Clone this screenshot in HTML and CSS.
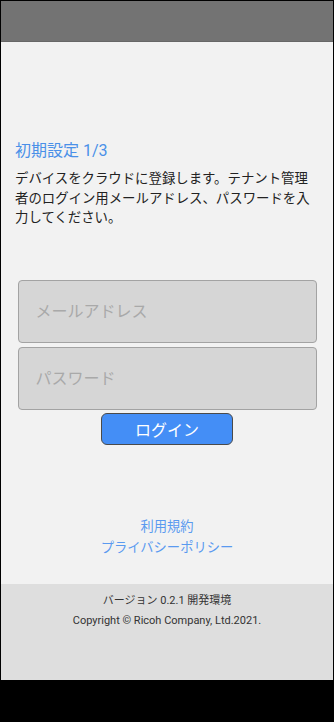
FILE: index.html
```html
<!DOCTYPE html>
<html lang="ja">
<head>
    <meta charset="UTF-8">
    <meta name="viewport" content="width=device-width, initial-scale=1.0">
    <title>初期設定</title>
    <link rel="stylesheet" href="styles.css">
</head>
<body>

<div class="screen">

    <!-- Status bar -->
    <div class="status-bar"></div>

    <!-- Main -->
    <div class="main">
        <h1 class="setup-title">初期設定 1/3</h1>
        <p class="setup-text">デバイスをクラウドに登録します。テナント管理者のログイン用メールアドレス、パスワードを入力してください。</p>

        <form class="login-form" onsubmit="return false;">
            <input type="email" class="text-input" placeholder="メールアドレス">
            <input type="password" class="text-input" placeholder="パスワード">
            <button type="submit" class="login-btn">ログイン</button>
        </form>

        <div class="links">
            <a href="#">利用規約</a>
            <a href="#">プライバシーポリシー</a>
        </div>
    </div>

    <!-- Footer -->
    <div class="footer">
        <p>バージョン 0.2.1 開発環境</p>
        <p>Copyright © Ricoh Company, Ltd.2021.</p>
    </div>

</div>

</body>
</html>
```

FILE: styles.css
```css
/* Basic Reset */
* {
    margin: 0;
    padding: 0;
    box-sizing: border-box;
}

body {
    background-color: #000;
    font-family: Roboto, "Noto Sans CJK JP", sans-serif;
    width: 334px;
    height: 722px;
    overflow: hidden;
}

/* Phone screen */
.screen {
    display: flex;
    flex-direction: column;
    width: 332px;
    height: 679px;
    margin: 1px 0 0 1px;
    background-color: #f2f2f2;
}

.status-bar {
    height: 41px;
    background-color: #737373;
    border-bottom: 1px solid #676767;
}

/* Main content */
.main {
    flex: 1;
    padding: 0 14px;
}

.setup-title {
    margin-top: 99px;
    font-size: 16px;
    font-weight: normal;
    line-height: 20px;
    color: #4a90e8;
}

.setup-text {
    margin-top: 8px;
    font-size: 13.4px;
    line-height: 19.5px;
    color: #222;
}

.login-form {
    display: flex;
    flex-direction: column;
    align-items: center;
    gap: 4px;
    margin: 52px 2px 0 2px;
}

.text-input {
    width: 299px;
    height: 63px;
    padding: 0 17px;
    font-family: inherit;
    font-size: 16px;
    color: #333;
    background-color: #d6d6d6;
    border: 1px solid #a3a3a3;
    border-radius: 4px;
    outline: none;
}

.text-input::placeholder {
    color: #a9a9a9;
}

.login-btn {
    width: 132px;
    height: 32px;
    margin-top: -1px;
    font-family: inherit;
    font-size: 16px;
    color: #fff;
    background-color: #448ef6;
    border: 1px solid #4a4a4a;
    border-radius: 6px;
    cursor: pointer;
}

.links {
    display: flex;
    flex-direction: column;
    align-items: center;
    margin-top: 71px;
}

.links a {
    font-size: 13.3px;
    line-height: 21px;
    color: #5a9af0;
    text-decoration: none;
}

/* Footer */
.footer {
    height: 96px;
    padding-top: 7px;
    background-color: #dedede;
    text-align: center;
}

.footer p {
    font-size: 11px;
    line-height: 20px;
    color: #333;
}
```
